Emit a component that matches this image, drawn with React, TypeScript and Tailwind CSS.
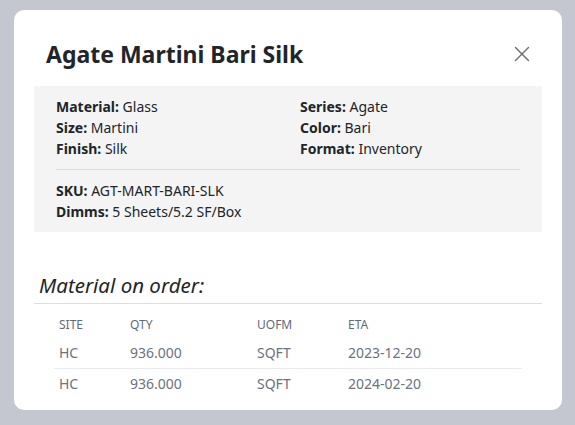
import { X } from 'lucide-react';

const specs = [
    ['Material', 'Glass', 'Series', 'Agate'],
    ['Size', 'Martini', 'Color', 'Bari'],
    ['Finish', 'Silk', 'Format', 'Inventory'],
];

const orders = [
    { site: 'HC', qty: '936.000', uofm: 'SQFT', eta: '2023-12-20' },
    { site: 'HC', qty: '936.000', uofm: 'SQFT', eta: '2024-02-20' },
];

const Field = ({ label, value }: { label: string; value: string }) => (
    <div className="h-[21px] leading-[21px]">
        <span className="font-bold text-[#212529]">{label}:</span> <span className="text-[#212529]">{value}</span>
    </div>
);

export default function App() {
    return (
        <div className="min-h-screen w-full bg-[#c4c7d0] pt-[10px] pl-[14px] font-['Noto_Sans',sans-serif]">
            <div className="w-[548px] h-[400px] rounded-[10px] bg-white px-5">
                {/* Header */}
                <div className="flex items-center justify-between h-[76px] pt-[12px] pl-3 pr-[7px]">
                    <h1 className="text-[23px] font-bold text-[#212529]">Agate Martini Bari Silk</h1>
                    <X size={26} strokeWidth={1.3} className="text-[#6c6c6c]" />
                </div>

                {/* Spec box */}
                <div className="bg-[#f4f4f4] px-[22px] pt-[10px] pb-[10px] text-[14px]">
                    <div className="grid grid-cols-[244px_1fr]">
                        {specs.map(([l1, v1, l2, v2]) => (
                            <div key={l1} className="contents">
                                <Field label={l1} value={v1} />
                                <Field label={l2} value={v2} />
                            </div>
                        ))}
                    </div>
                    <div className="border-t border-[#dcdcdc] mt-[10px] pt-[10px]">
                        <Field label="SKU" value="AGT-MART-BARI-SLK" />
                        <Field label="Dimms" value="5 Sheets/5.2 SF/Box" />
                    </div>
                </div>

                {/* Orders */}
                <div className="mt-[38px] pl-[5px] text-[20.5px] italic text-[#212529] leading-[30px]">Material on order:</div>
                <div className="border-t border-[#dedede] mt-[3px] pt-[9px] px-5">
                    <table className="w-[468px] text-left">
                        <thead>
                            <tr className="text-[12px] text-[#5f6b7a] uppercase">
                                <th className="font-normal pl-[5px] w-[76px] h-[24px]">Site</th>
                                <th className="font-normal w-[127px]">Qty</th>
                                <th className="font-normal w-[91px]">UOFM</th>
                                <th className="font-normal">ETA</th>
                            </tr>
                        </thead>
                        <tbody className="text-[14px] text-[#6b7280]">
                            {orders.map((o, i) => (
                                <tr key={o.eta} className={i > 0 ? 'border-t border-[#e8eaf0]' : ''}>
                                    <td className="pl-[5px] h-[31px]">{o.site}</td>
                                    <td>{o.qty}</td>
                                    <td>{o.uofm}</td>
                                    <td>{o.eta}</td>
                                </tr>
                            ))}
                        </tbody>
                    </table>
                </div>
            </div>
        </div>
    );
}
